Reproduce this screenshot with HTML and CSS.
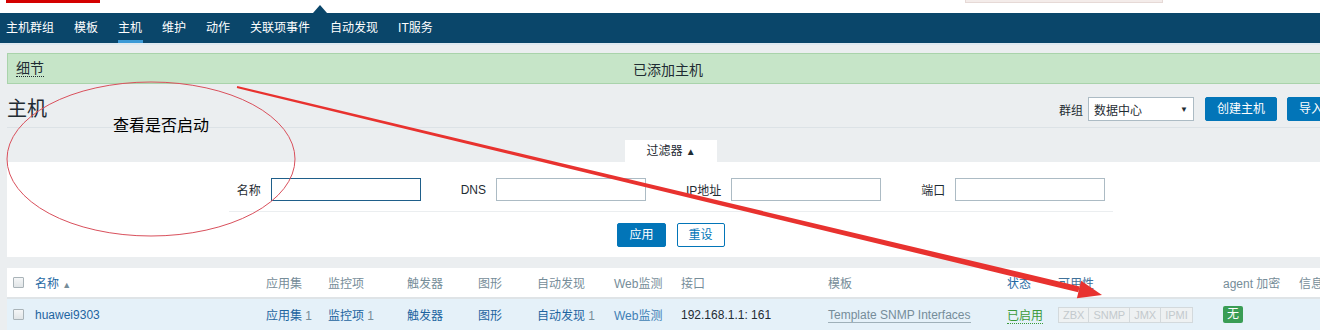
FILE: index.html
```html
<!DOCTYPE html>
<html lang="zh-CN">
<head>
<meta charset="utf-8">
<title>主机</title>
<link rel="stylesheet" href="styles.css">
</head>
<body>
<div class="topbar">
  <div class="logo"></div>
  <div class="search"></div>
</div>
<nav class="nav">
  <span class="nav-pointer"></span>
  <a class="nav-item">主机群组</a>
  <a class="nav-item">模板</a>
  <a class="nav-item selected">主机</a>
  <a class="nav-item">维护</a>
  <a class="nav-item">动作</a>
  <a class="nav-item">关联项事件</a>
  <a class="nav-item">自动发现</a>
  <a class="nav-item">IT服务</a>
</nav>
<div class="nav-shadow"></div>

<main class="page">
  <div class="msg">
    <span class="msg-details">细节</span>
    <span class="msg-title">已添加主机</span>
    <span></span>
  </div>

  <div class="header">
    <h1 class="title">主机</h1>
    <div class="header-controls">
      <span class="ctrl-label">群组</span>
      <div class="select"><span>数据中心</span><span class="caret">▼</span></div>
      <button class="btn">创建主机</button>
      <button class="btn">导入</button>
    </div>
  </div>

  <div class="filter">
    <div class="filter-tabbar"><div class="filter-tab">过滤器 <span class="tab-arrow">▲</span></div></div>
    <div class="filter-body">
      <div class="filter-row">
        <div class="field"><span class="field-label">名称</span><input class="input focused" type="text"></div>
        <div class="field"><span class="field-label">DNS</span><input class="input" type="text"></div>
        <div class="field"><span class="field-label">IP地址</span><input class="input" type="text"></div>
        <div class="field"><span class="field-label">端口</span><input class="input" type="text"></div>
      </div>
      <div class="filter-buttons">
        <button class="btn">应用</button>
        <button class="btn btn-alt">重设</button>
      </div>
    </div>
  </div>

  <table class="list">
    <colgroup>
      <col style="width:28px"><col style="width:231px"><col style="width:62px"><col style="width:79px"><col style="width:71px"><col style="width:59px"><col style="width:77px"><col style="width:67px"><col style="width:147px"><col style="width:179px"><col style="width:51px"><col style="width:165px"><col style="width:76px"><col style="width:36px">
    </colgroup>
    <thead>
      <tr>
        <th class="cb-cell"><span class="checkbox"></span></th>
        <th><span class="sort-link">名称</span> <span class="sort-arrow">▲</span></th>
        <th>应用集</th>
        <th>监控项</th>
        <th>触发器</th>
        <th>图形</th>
        <th>自动发现</th>
        <th>Web监测</th>
        <th>接口</th>
        <th>模板</th>
        <th><span class="sort-link">状态</span></th>
        <th><span class="avail-head">可用性</span></th>
        <th>agent 加密</th>
        <th>信息</th>
      </tr>
    </thead>
    <tbody>
      <tr>
        <td class="cb-cell"><span class="checkbox"></span></td>
        <td><a class="link">huawei9303</a></td>
        <td><a class="link">应用集</a><span class="count"> 1</span></td>
        <td><a class="link">监控项</a><span class="count"> 1</span></td>
        <td><a class="link">触发器</a></td>
        <td><a class="link">图形</a></td>
        <td><a class="link">自动发现</a><span class="count"> 1</span></td>
        <td><a class="link link-light">Web监测</a></td>
        <td>192.168.1.1: 161</td>
        <td><a class="link-alt">Template SNMP Interfaces</a></td>
        <td><a class="status-on">已启用</a></td>
        <td><span class="avail"><span>ZBX</span><span>SNMP</span><span>JMX</span><span>IPMI</span></span></td>
        <td><span class="badge">无</span></td>
        <td></td>
      </tr>
    </tbody>
  </table>
</main>

<svg class="annot-svg" width="1320" height="330" viewBox="0 0 1320 330">
  <ellipse cx="151" cy="159" rx="144" ry="77" fill="none" stroke="#d9505c" stroke-width="1"/>
  <polygon points="237.2,86 236.8,88 1078.2,292.3 1079.8,286.5" fill="#e8322f"/>
  <polygon points="1102,295 1076.9,298.2 1081.1,280.7" fill="#e8322f"/>
</svg>
<div class="annot-text">查看是否启动</div>
</body>
</html>
```

FILE: styles.css
```css
html, body {
  margin: 0;
  padding: 0;
}

body {
  width: 1320px;
  height: 330px;
  overflow: hidden;
  position: relative;
  background: #ebeef0;
  font-family: "Liberation Sans", "Noto Sans CJK SC", Arial, sans-serif;
  font-size: 12px;
  color: #1f2c33;
}

/* top strip */
.topbar {
  height: 13px;
  background: #fff;
  display: flex;
  align-items: flex-start;
}

.logo {
  width: 94px;
  height: 3px;
  margin-left: 6px;
  background: #d40000;
}

.search {
  width: 196px;
  height: 2px;
  margin-left: 865px;
  background: #f4ecea;
  border: 1px solid #e6d9d6;
  border-top: 0;
}

/* navigation */
.nav {
  height: 30px;
  background: #0a466a;
  display: flex;
  gap: 20px;
  padding-left: 6px;
  position: relative;
}

.nav-pointer {
  position: absolute;
  left: 313px;
  top: -8px;
  width: 0;
  height: 0;
  border-left: 7px solid transparent;
  border-right: 7px solid transparent;
  border-bottom: 8px solid #0a466a;
}

.nav-item {
  color: #fff;
  line-height: 30px;
  text-decoration: none;
  position: relative;
}

.nav-item.selected::after {
  content: "";
  position: absolute;
  left: 0;
  right: -1px;
  bottom: 0;
  height: 3px;
  background: #3c9ad6;
}

.nav-shadow {
  height: 2px;
  background: #dfe9f0;
}

/* page */
.page {
  margin-left: 7px;
  width: 1328px;
  padding-top: 8px;
}

.msg {
  box-sizing: border-box;
  height: 31px;
  display: grid;
  grid-template-columns: 1fr auto 1fr;
  align-items: center;
  padding: 0 14px 0 8px;
  background: #c6e5c8;
  border: 1px solid #a9d3ab;
  color: #1f2c33;
  font-size: 14px;
}

.msg-details {
  justify-self: start;
  line-height: 16px;
  border-bottom: 1px dotted #1f2c33;
}

.header {
  display: flex;
  justify-content: space-between;
  align-items: flex-start;
  padding: 13px 0 6px;
  border-bottom: 1px solid #dce2e6;
}

.title {
  margin: 0;
  font-size: 20px;
  line-height: 24px;
  font-weight: normal;
  color: #1f2c33;
}

.header-controls {
  display: flex;
  align-items: center;
}

.ctrl-label {
  margin-right: 5px;
}

.select {
  box-sizing: border-box;
  width: 106px;
  height: 24px;
  display: flex;
  justify-content: space-between;
  align-items: center;
  padding: 0 5px;
  background: #fff;
  border: 1px solid #acbbc4;
  margin-right: 11px;
}

.caret {
  font-size: 8px;
  color: #1f2c33;
}

.btn {
  box-sizing: border-box;
  height: 24px;
  padding: 0 11px;
  border: 1px solid #0275b8;
  border-radius: 2px;
  background: #0275b8;
  color: #fff;
  font-family: inherit;
  font-size: 12px;
  line-height: 22px;
}

.header-controls .btn + .btn {
  margin-left: 10px;
}

.btn-alt {
  background: #fff;
  color: #0275b8;
}

/* filter */
.filter {
  margin-top: 12px;
}

.filter-tabbar {
  display: flex;
  justify-content: center;
}

.filter-tab {
  width: 92px;
  height: 22px;
  line-height: 22px;
  text-align: center;
  background: #fff;
}

.tab-arrow {
  font-size: 10px;
}

.filter-body {
  background: #fff;
  padding: 8px 0 10px;
}

.filter-row {
  display: flex;
  align-items: center;
  gap: 40px;
  width: fit-content;
  margin: 0 auto;
  padding: 8px 8px 10px;
  border-bottom: 1px solid #ebeef0;
}

.field {
  display: flex;
  align-items: center;
  gap: 10px;
}

.input {
  box-sizing: border-box;
  width: 150px;
  height: 23px;
  margin: 0;
  padding: 0 5px;
  border: 1px solid #acbbc4;
  background: #fff;
  outline: none;
  font-family: inherit;
  font-size: 12px;
}

.input.focused {
  border-color: #1f5f8a;
}

.filter-buttons {
  display: flex;
  justify-content: center;
  gap: 11px;
  margin-top: 11px;
}

/* list table */
.list {
  margin-top: 11px;
  width: 1328px;
  border-collapse: collapse;
  table-layout: fixed;
  background: #fff;
}

.list th {
  height: 29px;
  padding: 0;
  text-align: left;
  font-weight: normal;
  color: #768d99;
  white-space: nowrap;
  border-bottom: 2px solid #dfe4e7;
}

.list td {
  height: 31px;
  padding: 0;
  background: #e5f1f9;
  white-space: nowrap;
  color: #1f2c33;
}

.list .cb-cell {
  padding-left: 6px;
}

.checkbox {
  display: block;
  box-sizing: border-box;
  width: 11px;
  height: 11px;
  border: 1px solid #a9b3b8;
  border-radius: 1px;
  background: linear-gradient(#f5f6f7, #e1e5e7);
}

.sort-link {
  color: #1f69a3;
}

.sort-arrow {
  font-size: 9px;
  color: #768d99;
}

.avail-head {
  color: #3f7199;
}

.link {
  color: #1d64a0;
  text-decoration: none;
}

.link-light {
  color: #3f7fb5;
}

.count {
  color: #768d99;
}

.link-alt {
  color: #768d99;
  text-decoration: none;
  border-bottom: 1px solid #9fb0b9;
}

.status-on {
  color: #3a9a3a;
  border-bottom: 1px dotted #3a9a3a;
}

.avail {
  display: inline-flex;
  vertical-align: middle;
}

.avail span {
  box-sizing: border-box;
  height: 16px;
  line-height: 14px;
  padding: 0 4px;
  font-size: 11px;
  color: #c3c9cd;
  background: #eef1f2;
  border: 1px solid #d3d9dc;
  margin-right: -1px;
}

.badge {
  display: inline-block;
  width: 20px;
  height: 17px;
  line-height: 17px;
  text-align: center;
  border-radius: 2px;
  background: #3a9d55;
  color: #fff;
  vertical-align: middle;
}

/* annotations drawn over the screenshot */
.annot-svg {
  position: absolute;
  left: 0;
  top: 0;
  pointer-events: none;
}

.annot-text {
  position: absolute;
  left: 113px;
  top: 116px;
  font-family: "Noto Sans CJK SC", sans-serif;
  font-size: 16px;
  line-height: 16px;
  color: #000;
}
```
